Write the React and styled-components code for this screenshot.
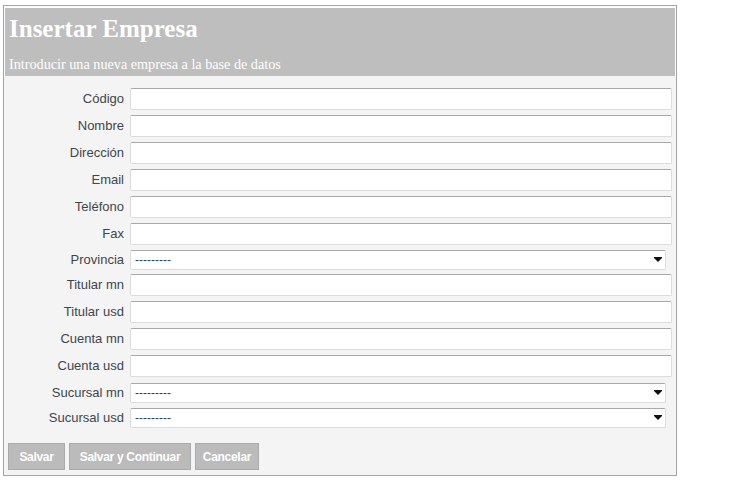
import React from 'react';
import styled, { createGlobalStyle } from 'styled-components';

const GlobalStyle = createGlobalStyle`
  html, body {
    margin: 0;
    padding: 0;
    background: #ffffff;
  }
  body {
    font-family: "Liberation Sans", Arial, sans-serif;
  }
`;

const Page = styled.div`
  padding: 5px 0 0 3px;
`;

const Box = styled.div`
  width: 672px;
  border: 1px solid #a3a3a3;
  background: #ffffff;
  padding-top: 2px;
`;

const Header = styled.div`
  margin: 0 1px;
  height: 68px;
  box-sizing: border-box;
  background: #bebebe;
  padding: 6px 4px 0;
  color: #ffffff;
  font-family: "Liberation Serif", "Times New Roman", serif;
`;

const Title = styled.h1`
  margin: 0;
  font-size: 25px;
  line-height: 30px;
  font-weight: bold;
`;

const Subtitle = styled.div`
  margin-top: 11px;
  font-size: 14.2px;
  line-height: 18px;
`;

const Body = styled.div`
  background: #f4f4f4;
  padding: 12px 4px 5px 0;
`;

const Fields = styled.div`
  display: grid;
  grid-template-columns: 120px 1fr;
  column-gap: 6px;
`;

const Label = styled.label`
  height: ${(p) => p.$h}px;
  display: flex;
  justify-content: flex-end;
  padding-top: ${(p) => (p.$select ? 2 : 3)}px;
  box-sizing: border-box;
  font-size: 13px;
  line-height: 16px;
  color: #3f454d;
`;

const Cell = styled.div`
  height: ${(p) => p.$h}px;
`;

const TextInput = styled.input`
  display: block;
  width: 100%;
  height: 22px;
  box-sizing: border-box;
  margin: 0;
  border: 1px solid #dcdcdc;
  border-top-color: #a9a9a9;
  border-radius: 2px;
  background: #ffffff;
  font-family: "Liberation Sans", Arial, sans-serif;
  font-size: 12px;
  padding: 0 4px;
  outline: none;
`;

const SelectWrap = styled.div`
  position: relative;
  width: calc(100% - 6px);
  height: 20px;
`;

const Select = styled.select`
  appearance: none;
  -webkit-appearance: none;
  display: block;
  width: 100%;
  height: 20px;
  box-sizing: border-box;
  margin: 0;
  border: 1px solid #dcdcdc;
  border-top-color: #a9a9a9;
  border-radius: 2px;
  background: #ffffff;
  color: #2f3f5c;
  font-family: "Liberation Sans", Arial, sans-serif;
  font-size: 12px;
  padding: 0 0 0 4px;
  outline: none;
`;

const Arrow = styled.span`
  position: absolute;
  right: 4px;
  top: 8px;
  width: 0;
  height: 0;
  border-left: 4px solid transparent;
  border-right: 4px solid transparent;
  border-top: 4px solid #111111;
  pointer-events: none;
  &::before {
    content: '';
    position: absolute;
    left: -4px;
    top: -5px;
    width: 8px;
    height: 1px;
    background: #111111;
  }
`;

const Actions = styled.div`
  display: flex;
  gap: 4px;
  margin-top: 11px;
  padding-left: 4px;
`;

const Button = styled.button`
  width: ${(p) => p.$w}px;
  height: 27px;
  box-sizing: border-box;
  padding: 0;
  border: 1px solid #aaaaaa;
  background: #bbbbbb;
  color: #ffffff;
  font-family: "Liberation Sans", Arial, sans-serif;
  font-size: 12px;
  font-weight: bold;
  letter-spacing: -0.3px;
  cursor: pointer;
`;

const fields = [
  { label: 'Código', h: 27 },
  { label: 'Nombre', h: 27 },
  { label: 'Dirección', h: 27 },
  { label: 'Email', h: 27 },
  { label: 'Teléfono', h: 27 },
  { label: 'Fax', h: 27 },
  { label: 'Provincia', h: 24, select: true },
  { label: 'Titular mn', h: 27 },
  { label: 'Titular usd', h: 27 },
  { label: 'Cuenta mn', h: 27 },
  { label: 'Cuenta usd', h: 28 },
  { label: 'Sucursal mn', h: 25, select: true },
  { label: 'Sucursal usd', h: 24, select: true },
];

export default function App() {
  return (
    <Page>
      <GlobalStyle />
      <Box>
        <Header>
          <Title>Insertar Empresa</Title>
          <Subtitle>Introducir una nueva empresa a la base de datos</Subtitle>
        </Header>
        <Body>
          <Fields>
            {fields.map((f) => (
              <React.Fragment key={f.label}>
                <Label $h={f.h} $select={f.select}>{f.label}</Label>
                <Cell $h={f.h}>
                  {f.select ? (
                    <SelectWrap>
                      <Select defaultValue="">
                        <option value="">---------</option>
                      </Select>
                      <Arrow />
                    </SelectWrap>
                  ) : (
                    <TextInput type="text" />
                  )}
                </Cell>
              </React.Fragment>
            ))}
          </Fields>
          <Actions>
            <Button $w={57}>Salvar</Button>
            <Button $w={122}>Salvar y Continuar</Button>
            <Button $w={64}>Cancelar</Button>
          </Actions>
        </Body>
      </Box>
    </Page>
  );
}
